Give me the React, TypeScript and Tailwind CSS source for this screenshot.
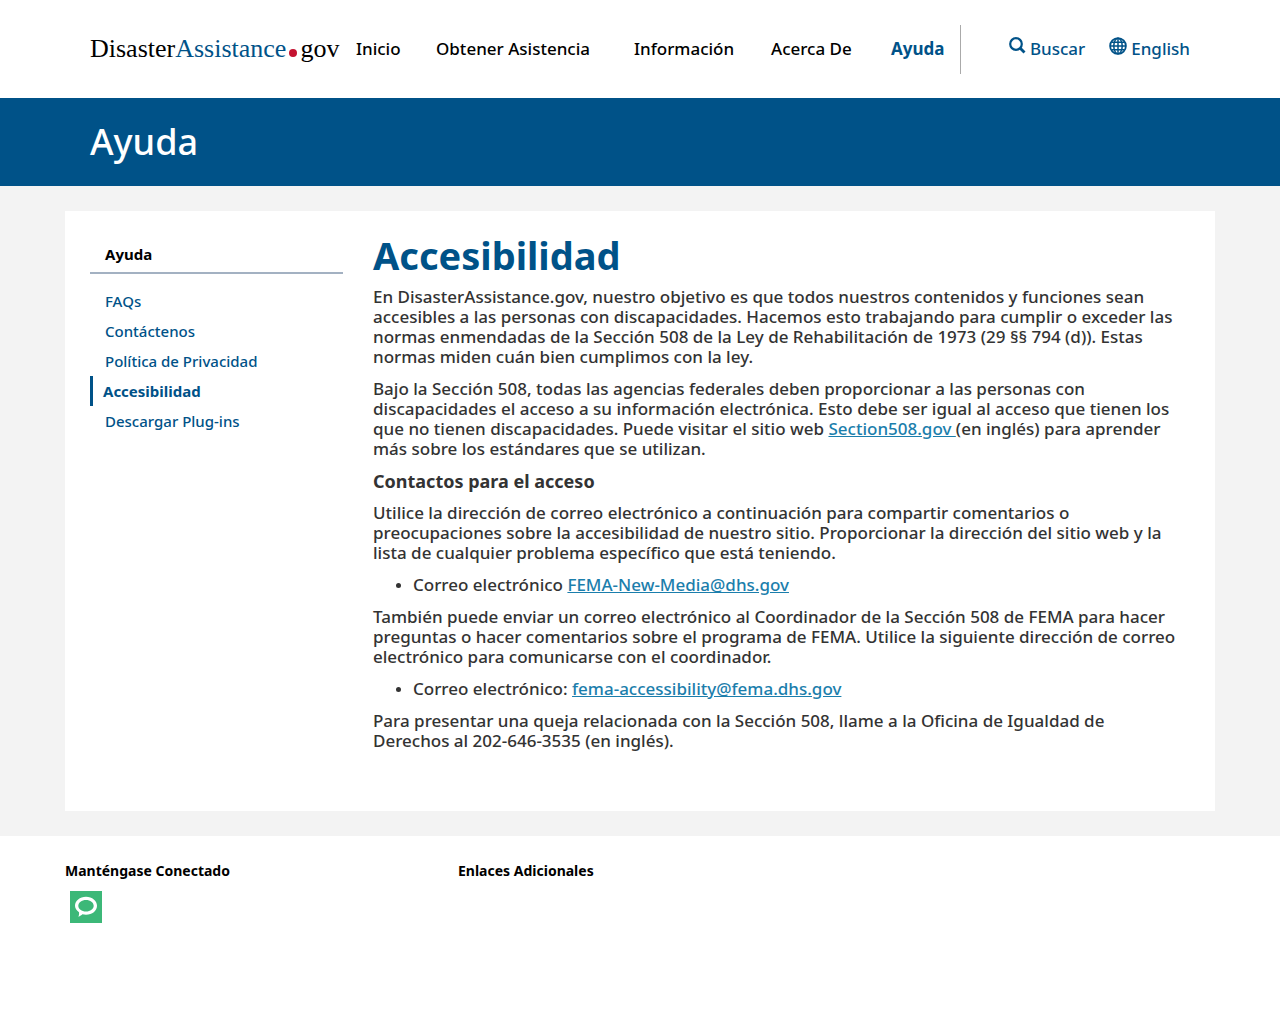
import type { ReactNode } from "react";

const navItems = [
  { label: "Inicio", width: "w-20" },
  { label: "Obtener Asistencia", width: "w-[198px]" },
  { label: "Información", width: "w-[137px]" },
  { label: "Acerca De", width: "w-[120px]" },
];

const sideLinks = ["FAQs", "Contáctenos", "Política de Privacidad", "Accesibilidad", "Descargar Plug-ins"];

function Logo() {
  return (
    <a
      href="#inicio"
      aria-label="DisasterAssistance.gov"
      className="flex w-[266px] shrink-0 items-baseline font-['Liberation_Serif',serif] text-[26px] leading-8 text-black"
    >
      <span>Disaster</span>
      <span className="text-[#005288]">Assistance</span>
      <span className="mx-[3px] size-2 rounded-full bg-[#c41230]" />
      <span>gov</span>
    </a>
  );
}

function SearchIcon() {
  return (
    <svg viewBox="0 0 17 17" className="size-[17px]" fill="none" stroke="currentColor" aria-hidden="true">
      <circle cx="7" cy="7" r="5.8" strokeWidth="2.2" />
      <path d="M11 11l4.500 4.500" strokeWidth="2.8" />
    </svg>
  );
}

function GlobeIcon() {
  return (
    <svg viewBox="0 0 18 18" className="size-[18px]" fill="none" stroke="currentColor" strokeWidth="1.5" aria-hidden="true">
      <circle cx="9" cy="9" r="7.9" strokeWidth="1.8" />
      <ellipse cx="9" cy="9" rx="4.2" ry="7.8" />
      <path d="M9 1v16M1 9h16M2.5 5.2h13M2.5 12.8h13" />
    </svg>
  );
}

function BubbleIcon() {
  return (
    <svg viewBox="0 0 32 32" className="size-8" aria-hidden="true">
      <path fill="#3cb878" d="M0 0h32v32H0z" />
      <path
        fill="#fff"
        fillRule="evenodd"
        d="M16 5.800c6.200 0 11 4 11 9s-4.800 9-11 9c-1.300 0-2.500-.2-3.600-.5-.9.900-2.200 1.800-4.100 2.400.7-1.200.9-2.900.7-4.500C6.500 19.600 5 17.300 5 14.800c0-5 4.800-9 11-9zm0 3.200c-4.300 0-7.700 2.600-7.700 5.800s3.400 5.800 7.700 5.800 7.700-2.600 7.700-5.800S20.300 9 16 9z"
      />
    </svg>
  );
}

function TextLink({ href, children }: { href: string; children: ReactNode }) {
  return (
    <a href={href} className="text-[#1b7eac] underline">
      {children}
    </a>
  );
}

export default function App() {
  return (
    <div className="min-h-screen bg-white font-['Noto_Sans',sans-serif] text-[#333333]">
      <header className="mx-auto flex min-h-[98px] max-w-[1150px] items-center px-[25px] text-[17px] leading-6 font-medium text-black">
        <Logo />
        <nav aria-label="Principal" className="flex items-center">
          {navItems.map((item) => (
            <a key={item.label} href="#" className={`${item.width} shrink-0 whitespace-nowrap`}>
              {item.label}
            </a>
          ))}
          <a href="#ayuda" aria-current="page" className="flex h-[49px] items-center border-r border-[#aaaaaa] pr-4 font-bold text-[#005288]">
            Ayuda
          </a>
        </nav>
        <div className="ml-auto flex items-center gap-6 text-[#005288]">
          <button type="button" className="flex items-start gap-1">
            <SearchIcon />
            Buscar
          </button>
          <a href="#en" className="flex items-start gap-1">
            <GlobeIcon />
            English
          </a>
        </div>
      </header>

      <div className="bg-[#005288]">
        <div className="mx-auto flex h-[88px] max-w-[1150px] items-center px-[25px] text-[36px] font-medium text-white">
          Ayuda
        </div>
      </div>

      <div className="bg-[#f3f3f3] py-[25px]">
        <div className="mx-auto flex min-h-[600px] max-w-[1150px] gap-[30px] bg-white px-[25px] py-6">
          <aside className="w-[253px] shrink-0 text-[15px] font-medium">
            <h2 className="border-b-2 border-[#a3b1c2] px-[15px] pt-[9px] pb-2 leading-5 font-bold text-black">Ayuda</h2>
            <ul className="mt-3 text-[#005288]">
              {sideLinks.map((label) => (
                <li key={label}>
                  <a
                    href="#"
                    className={
                      label === "Accesibilidad"
                        ? "block border-l-[3px] border-[#005288] pl-2.5 leading-[30px] font-bold"
                        : "block pl-[15px] leading-[30px]"
                    }
                  >
                    {label}
                  </a>
                </li>
              ))}
            </ul>
          </aside>

          <main className="min-w-0 flex-1 text-[17px] leading-5 font-medium">
            <h1 className="mb-3 text-[38px] leading-10 font-bold text-[#005288]">Accesibilidad</h1>
            <div className="space-y-3">
              <p>
                En DisasterAssistance.gov, nuestro objetivo es que todos nuestros contenidos y funciones sean accesibles a
                las personas con discapacidades. Hacemos esto trabajando para cumplir o exceder las normas enmendadas de la
                Sección 508 de la Ley de Rehabilitación de 1973 (29 §§ 794 (d)). Estas normas miden cuán bien cumplimos con
                la ley.
              </p>
              <p>
                Bajo la Sección 508, todas las agencias federales deben proporcionar a las personas con discapacidades el
                acceso a su información electrónica. Esto debe ser igual al acceso que tienen los que no tienen
                discapacidades. Puede visitar el sitio web{" "}
                <TextLink href="https://www.section508.gov">Section508.gov </TextLink>
                (en inglés) para aprender más sobre los estándares que se utilizan.
              </p>
              <h2 className="text-lg leading-5 font-bold">Contactos para el acceso</h2>
              <p>
                Utilice la dirección de correo electrónico a continuación para compartir comentarios o preocupaciones sobre
                la accesibilidad de nuestro sitio. Proporcionar la dirección del sitio web y la lista de cualquier problema
                específico que está teniendo.
              </p>
              <ul className="list-disc pl-10 marker:text-sm">
                <li>
                  Correo electrónico <TextLink href="mailto:FEMA-New-Media@dhs.gov">FEMA-New-Media@dhs.gov</TextLink>
                </li>
              </ul>
              <p>
                También puede enviar un correo electrónico al Coordinador de la Sección 508 de FEMA para hacer preguntas o
                hacer comentarios sobre el programa de FEMA. Utilice la siguiente dirección de correo electrónico para
                comunicarse con el coordinador.
              </p>
              <ul className="list-disc pl-10 marker:text-sm">
                <li>
                  Correo electrónico:{" "}
                  <TextLink href="mailto:fema-accessibility@fema.dhs.gov">fema-accessibility@fema.dhs.gov</TextLink>
                </li>
              </ul>
              <p>
                Para presentar una queja relacionada con la Sección 508, llame a la Oficina de Igualdad de{" "}
                <span className="whitespace-nowrap">Derechos al 202-646-3535</span> (en inglés).
              </p>
            </div>
          </main>
        </div>
      </div>

      <footer className="mx-auto flex max-w-[1150px] pt-[25px] text-sm leading-5 font-bold text-black">
        <section className="w-[393px]">
          <h2>Manténgase Conectado</h2>
          <a href="#" aria-label="GovDelivery" className="mt-2.5 ml-[5px] block w-8">
            <BubbleIcon />
          </a>
        </section>
        <section>
          <h2>Enlaces Adicionales</h2>
        </section>
      </footer>
    </div>
  );
}
